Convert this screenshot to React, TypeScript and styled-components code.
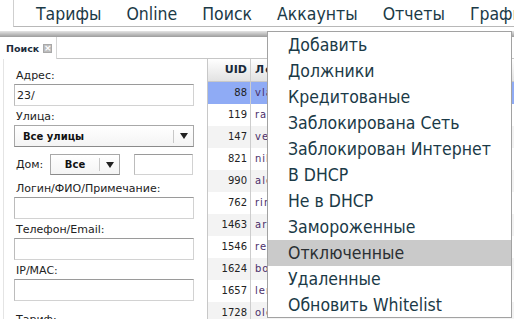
import React from 'react';
import styled, { createGlobalStyle } from 'styled-components';

/* ------------------------------- Global styles ------------------------------ */
const GlobalStyle = createGlobalStyle`
  *, *::before, *::after { box-sizing: border-box; }
  html, body { margin: 0; padding: 0; background: #fff; }
  body { font-family: "DejaVu Sans", Verdana, sans-serif; color: #222; }
`;

const menuFont = `"DejaVu Sans Condensed", "DejaVu Sans", sans-serif`;

/* ---------------------------------- Data ---------------------------------- */
const topItems = ['Тарифы', 'Online', 'Поиск', 'Аккаунты', 'Отчеты', 'Графики'];

const accountItems = [
  'Добавить',
  'Должники',
  'Кредитованые',
  'Заблокирована Сеть',
  'Заблокирован Интернет',
  'В DHCP',
  'Не в DHCP',
  'Замороженные',
  'Отключенные',
  'Удаленные',
  'Обновить Whitelist',
];

const users = [
  { uid: 88, login: 'vladimir' },
  { uid: 119, login: 'ramil' },
  { uid: 147, login: 'vera' },
  { uid: 821, login: 'nikolay' },
  { uid: 990, login: 'alex' },
  { uid: 762, login: 'rinat' },
  { uid: 1463, login: 'artur' },
  { uid: 1546, login: 'renat' },
  { uid: 1624, login: 'boris' },
  { uid: 1657, login: 'lena' },
  { uid: 1728, login: 'oleg' },
  { uid: 1802, login: 'ivan' },
];

/* -------------------------------- Components ------------------------------- */
const App = () => {
  return (
    <Screen>
      <GlobalStyle />
      <TopMenu>
        {topItems.map((item) => (
          <TopItem key={item}>{item}</TopItem>
        ))}
      </TopMenu>
      <ShadowBand />

      <TabStrip>
        <Tab>
          Поиск
          <CloseBox>×</CloseBox>
        </Tab>
        <TabFiller />
      </TabStrip>

      <Body>
        <SidePanel>
          <Label>Адрес:</Label>
          <TextBox defaultValue="23/" />
          <Label>Улица:</Label>
          <Select>
            <SelectValue>Все улицы</SelectValue>
            <SelectDivider />
            <SelectArrow />
          </Select>

          <HouseRow>
            <InlineLabel>Дом:</InlineLabel>
            <Select $width={70} $center>
              <SelectValue>Все</SelectValue>
              <SelectDivider />
              <SelectArrow />
            </Select>
            <TextBox $width={59} defaultValue="" />
          </HouseRow>

          <Label>Логин/ФИО/Примечание:</Label>
          <TextBox defaultValue="" />
          <Label>Телефон/Email:</Label>
          <TextBox defaultValue="" />
          <Label>IP/MAC:</Label>
          <TextBox defaultValue="" />
          <Label $top={12}>Тариф:</Label>
        </SidePanel>

        <Grid>
          <HeaderRow>
            <UidCell $header>UID</UidCell>
            <LoginCell $header>Логин</LoginCell>
          </HeaderRow>
          {users.map((u, i) => (
            <Row key={u.uid} $selected={i === 0} $odd={i % 2 === 0}>
              <UidCell>{u.uid}</UidCell>
              <LoginCell>{u.login}</LoginCell>
            </Row>
          ))}
        </Grid>
      </Body>

      <Dropdown>
        {accountItems.map((item, i) => (
          <DropItem key={item} $active={i === 8}>
            {item}
          </DropItem>
        ))}
      </Dropdown>
    </Screen>
  );
};

/* --------------------------------- Styles --------------------------------- */
const Screen = styled.div`
  position: relative;
  width: 514px;
  height: 319px;
  overflow: hidden;
  background: #fff;
`;

const TopMenu = styled.nav`
  display: flex;
  gap: 25px;
  height: 27px;
  margin-left: 13px;
  padding: 2px 0 0 22px;
  border-left: 1px solid #cfcfcf;
  border-bottom: 1px solid #b8b8b8;
  font: 17.5px/25px ${menuFont};
  color: #1b3a47;
  white-space: nowrap;
  overflow: hidden;
`;

const TopItem = styled.span`
  flex: none;
`;

const ShadowBand = styled.div`
  height: 6px;
  margin-top: 4px;
  background: linear-gradient(#e4e4e4, #9c9c9c);
`;

const TabStrip = styled.div`
  display: flex;
  height: 22px;
`;

const Tab = styled.div`
  display: flex;
  align-items: center;
  gap: 4px;
  padding: 1px 4px 0 6px;
  border-right: 1px solid #d6d6d6;
  font: bold 9.5px "DejaVu Sans", sans-serif;
  color: #1c2c3c;
`;

const CloseBox = styled.span`
  display: flex;
  align-items: center;
  justify-content: center;
  width: 9px;
  height: 9px;
  background: #bdbdbd;
  border: 1px solid #a8a8a8;
  color: #fff;
  font: bold 9px/1 "DejaVu Sans", sans-serif;
`;

const TabFiller = styled.div`
  flex: 1;
  border-bottom: 1px solid #c6c6c6;
`;

const Body = styled.div`
  display: flex;
  align-items: flex-start;
`;

const SidePanel = styled.div`
  flex: none;
  display: flex;
  flex-direction: column;
  width: 204px;
  margin-left: 3px;
  padding: 6px 0 0 10px;
  border-left: 1px solid #e4e4e4;
  min-height: 270px;
`;

const Label = styled.div<{ $top?: number }>`
  padding: ${(p) => p.$top ?? 4}px 0 2px 2px;
  font-size: 11px;
  line-height: 13px;
  color: #222;
  white-space: nowrap;
`;

const InlineLabel = styled.span`
  width: 36px;
  padding-left: 2px;
  font-size: 11px;
  color: #222;
`;

const TextBox = styled.input<{ $width?: number }>`
  display: block;
  width: ${(p) => p.$width ?? 180}px;
  height: 22px;
  margin: 0;
  padding: 0 2px;
  border: 1px solid #d2d2d2;
  border-top-color: #9a9a9a;
  border-left-color: #bcbcbc;
  background: #fff;
  font: 11px "DejaVu Sans", sans-serif;
  color: #222;
  outline: none;
`;

const Select = styled.div<{ $width?: number; $center?: boolean }>`
  display: flex;
  align-items: center;
  width: ${(p) => p.$width ?? 180}px;
  height: 22px;
  padding-left: ${(p) => (p.$center ? 0 : 8)}px;
  border: 1px solid #a8a8a8;
  border-bottom-color: #8a8a8a;
  background: linear-gradient(#ffffff, #f4f4f4);
  font: bold 10px "DejaVu Sans", sans-serif;
  color: #111;
  text-align: ${(p) => (p.$center ? 'center' : 'left')};
  flex: none;
`;

const SelectValue = styled.span`
  flex: 1;
`;

const SelectDivider = styled.span`
  width: 1px;
  height: 13px;
  background: #c8c8c8;
`;

const SelectArrow = styled.span`
  width: 19px;
  display: flex;
  justify-content: center;
  &::after {
    content: '';
    border-left: 4px solid transparent;
    border-right: 4px solid transparent;
    border-top: 6px solid #222;
  }
`;

const HouseRow = styled.div`
  display: flex;
  align-items: center;
  height: 21px;
  margin: 7px 0 3px;

  ${TextBox} {
    height: 21px;
    margin-left: 14px;
  }
  ${Select} {
    height: 21px;
  }
`;

const Grid = styled.div`
  flex: 1;
  border-left: 1px solid #c8c8c8;
  font: 10px "DejaVu Sans", sans-serif;
`;

const HeaderRow = styled.div`
  display: grid;
  grid-template-columns: 43px 1fr;
  height: 23px;
  background: linear-gradient(#ffffff, #e2e2e2);
  border-bottom: 1px solid #c8c8c8;
  font: bold 11px "DejaVu Sans", sans-serif;
  color: #1a2a3a;
  line-height: 22px;
`;

const Row = styled.div<{ $selected?: boolean; $odd?: boolean }>`
  display: grid;
  grid-template-columns: 43px 1fr;
  height: 22px;
  line-height: 22px;
  background: ${(p) => (p.$selected ? '#8fabf5' : p.$odd ? '#f3f3f3' : '#fff')};
`;

const UidCell = styled.div<{ $header?: boolean }>`
  text-align: right;
  padding-right: 3px;
  border-right: 1px solid #cdcdcd;
  color: ${(p) => (p.$header ? '#1a2a3a' : '#222')};
`;

const LoginCell = styled.div<{ $header?: boolean }>`
  padding-left: 4px;
  white-space: nowrap;
  overflow: hidden;
  letter-spacing: 1px;
  color: ${(p) => (p.$header ? '#1a2a3a' : '#4a2f6a')};
`;

const Dropdown = styled.ul`
  position: absolute;
  top: 31px;
  left: 267px;
  width: 245px;
  height: 287px;
  margin: 0;
  padding: 0;
  list-style: none;
  background: #fff;
  border: 1px solid #a2a2a2;
  font: 17.5px/26px ${menuFont};
  color: #1b3a47;
`;

const DropItem = styled.li<{ $active?: boolean }>`
  height: 26px;
  padding-left: 20px;
  white-space: nowrap;
  background: ${(p) => (p.$active ? '#cacaca' : 'transparent')};
  color: ${(p) => (p.$active ? '#2a2f33' : '#1b3a47')};
`;

export default App;
